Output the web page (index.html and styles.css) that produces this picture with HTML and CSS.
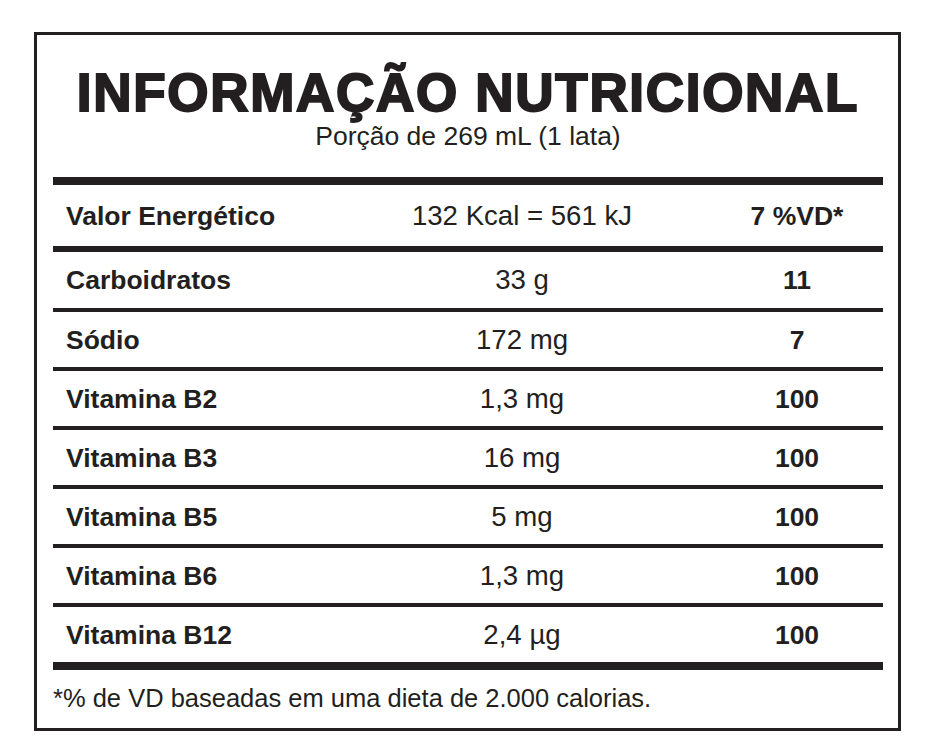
FILE: index.html
```html
<!DOCTYPE html>
<html lang="pt">
<head>
<meta charset="utf-8">
<title>Informação Nutricional</title>
<link rel="stylesheet" href="styles.css">
</head>
<body>
<div class="label">
  <h1 class="title">INFORMAÇÃO NUTRICIONAL</h1>
  <p class="portion">Porção de 269 mL (1 lata)</p>
  <div class="table">
    <div class="row head">
      <span class="name">Valor Energético</span>
      <span class="amount">132 Kcal = 561 kJ</span>
      <span class="vd">7 %VD*</span>
    </div>
    <div class="row second">
      <span class="name">Carboidratos</span>
      <span class="amount">33 g</span>
      <span class="vd">11</span>
    </div>
    <div class="row">
      <span class="name">Sódio</span>
      <span class="amount">172 mg</span>
      <span class="vd">7</span>
    </div>
    <div class="row">
      <span class="name">Vitamina B2</span>
      <span class="amount">1,3 mg</span>
      <span class="vd">100</span>
    </div>
    <div class="row">
      <span class="name">Vitamina B3</span>
      <span class="amount">16 mg</span>
      <span class="vd">100</span>
    </div>
    <div class="row">
      <span class="name">Vitamina B5</span>
      <span class="amount">5 mg</span>
      <span class="vd">100</span>
    </div>
    <div class="row">
      <span class="name">Vitamina B6</span>
      <span class="amount">1,3 mg</span>
      <span class="vd">100</span>
    </div>
    <div class="row last">
      <span class="name">Vitamina B12</span>
      <span class="amount">2,4 µg</span>
      <span class="vd">100</span>
    </div>
  </div>
  <p class="footnote">*% de VD baseadas em uma dieta de 2.000 calorias.</p>
</div>
</body>
</html>
```

FILE: styles.css
```css
html, body {
  margin: 0;
  padding: 0;
  background: #ffffff;
}

body {
  font-family: "Liberation Sans", Arial, sans-serif;
  color: #231f20;
}

.label {
  box-sizing: border-box;
  width: 867px;
  height: 699px;
  margin: 32px 0 0 34px;
  border: 3px solid #231f20;
  padding: 0 15px 0 16px;
  display: flex;
  flex-direction: column;
}

.title {
  margin: 31px 0 0 0;
  font-size: 53px;
  line-height: 53px;
  font-weight: 700;
  letter-spacing: 1.7px;
  text-align: center;
  -webkit-text-stroke: 2px #231f20;
}

.portion {
  margin: 4px 0 0 0;
  font-size: 26.5px;
  line-height: 26px;
  text-align: center;
}

.table {
  margin-top: 28px;
  border-top: 8px solid #231f20;
  border-bottom: 8px solid #231f20;
}

.row {
  display: grid;
  grid-template-columns: 280px 378px 172px;
  align-items: center;
  height: 55px;
  border-bottom: 4px solid #231f20;
  font-size: 26.5px;
  line-height: 26px;
}

.row.head {
  height: 61px;
  border-bottom-width: 6px;
}

.row.second {
  height: 56px;
}

.row.last {
  border-bottom: none;
}

.name {
  font-weight: 700;
  padding-left: 13px;
}

.amount {
  text-align: center;
  font-size: 27.6px;
}

.vd {
  text-align: center;
  font-weight: 700;
}

.footnote {
  margin: 15px 0 0 0;
  font-size: 25.5px;
  line-height: 26px;
}
```
